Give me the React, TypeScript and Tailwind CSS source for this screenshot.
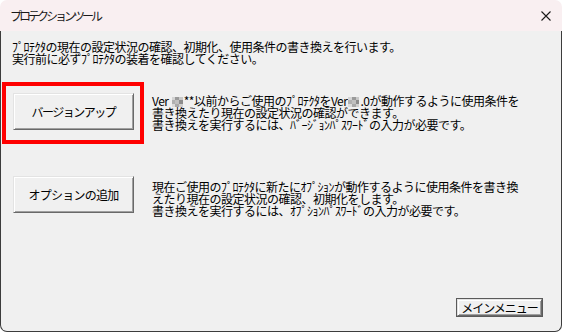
import React from 'react';

const FONT = { fontFamily: '"Noto Sans CJK JP", "Noto Sans", sans-serif' };

function Mosaic() {
  return (
    <span className="mx-[1px] inline-block h-[10px] w-[11px] overflow-hidden align-[-1px]">
      <span className="grid h-full w-full grid-cols-3 grid-rows-3">
        <span className="bg-[#d4d4d4]" />
        <span className="bg-[#9a9a9a]" />
        <span className="bg-[#c8c8c8]" />
        <span className="bg-[#b0b0b0]" />
        <span className="bg-[#c0c0c0]" />
        <span className="bg-[#8c8c8c]" />
        <span className="bg-[#dcdcdc]" />
        <span className="bg-[#a8a8a8]" />
        <span className="bg-[#cfcfcf]" />
      </span>
    </span>
  );
}

function ClassicButton({ label, className }: { label: string; className: string }) {
  return (
    <button
      className={`flex shrink-0 items-center justify-center border border-t-[#e3e3e3] border-l-[#e3e3e3] border-r-[#696969] border-b-[#696969] bg-[#f0f0f0] text-[12px] text-black shadow-[inset_1px_1px_0_#ffffff,inset_-1px_-1px_0_#a0a0a0] ${className}`}
    >
      {label}
    </button>
  );
}

export default function App() {
  return (
    <div className="relative flex h-[332px] w-[562px] flex-col overflow-hidden text-black" style={FONT}>
      {/* title bar */}
      <div className="flex h-[31px] shrink-0 items-center justify-between rounded-t-[7px] bg-[#f9eff1] pl-[10px] pr-[11px]">
        <span className="text-[12px] leading-none tracking-[-3px] text-[#1a1a1a]">プロテクションツール</span>
        <svg width="10" height="10" viewBox="0 0 10 10" className="mt-[1px]">
          <path d="M0.5 0.5 L9.5 9.5 M9.5 0.5 L0.5 9.5" stroke="#1a1a1a" strokeWidth="1.1" />
        </svg>
      </div>

      {/* body */}
      <div className="flex flex-1 flex-col rounded-b-[7px] border-x border-b border-[#3c3c3c] bg-[#f0f0f0] text-[12px] leading-[12px]">
        <div className="pl-[11px] pt-[10px] tracking-[-0.5px]">
          <p>ﾌﾟﾛﾃｸﾀの現在の設定状況の確認、初期化、使用条件の書き換えを行います。</p>
          <p>実行前に必ずﾌﾟﾛﾃｸﾀの装着を確認してください。</p>
        </div>

        <div className="mt-[28px] flex">
          <ClassicButton label="バージョンアップ" className="ml-[12px] h-[37px] w-[121px] tracking-[-1.5px]" />
          <div className="ml-[18px] pt-[2px] leading-[12px] tracking-[-0.5px]">
            <p className="whitespace-nowrap">
              Ver <Mosaic />**以前からご使用のﾌﾟﾛﾃｸﾀをVer<Mosaic />.0が動作するように使用条件を
            </p>
            <p>書き換えたり現在の設定状況の確認ができます。</p>
            <p>書き換えを実行するには、ﾊﾞｰｼﾞｮﾝﾊﾟｽﾜｰﾄﾞの入力が必要です。</p>
          </div>
        </div>

        <div className="mt-[45px] flex">
          <ClassicButton label="オプションの追加" className="ml-[12px] h-[37px] w-[121px] tracking-[-0.75px]" />
          <div className="ml-[18px] pt-[5px] leading-[12px] tracking-[-0.5px]">
            <p className="whitespace-nowrap">現在ご使用のﾌﾟﾛﾃｸﾀに新たにｵﾌﾟｼｮﾝが動作するように使用条件を書き換</p>
            <p>えたり現在の設定状況の確認、初期化をします。</p>
            <p>書き換えを実行するには、ｵﾌﾟｼｮﾝﾊﾟｽﾜｰﾄﾞの入力が必要です。</p>
          </div>
        </div>

        <div className="flex flex-1 items-end justify-end pb-[14px] pr-[18px]">
          <div className="border border-[#5a5a5a]">
            <ClassicButton label="メインメニュー" className="h-[17px] w-[85px] text-[11px] tracking-[-1px]" />
          </div>
        </div>
      </div>

      {/* red annotation frame */}
      <div className="pointer-events-none absolute left-[2px] top-[82px] h-[62px] w-[142px] border-[4px] border-[#ff0000]" />
    </div>
  );
}
